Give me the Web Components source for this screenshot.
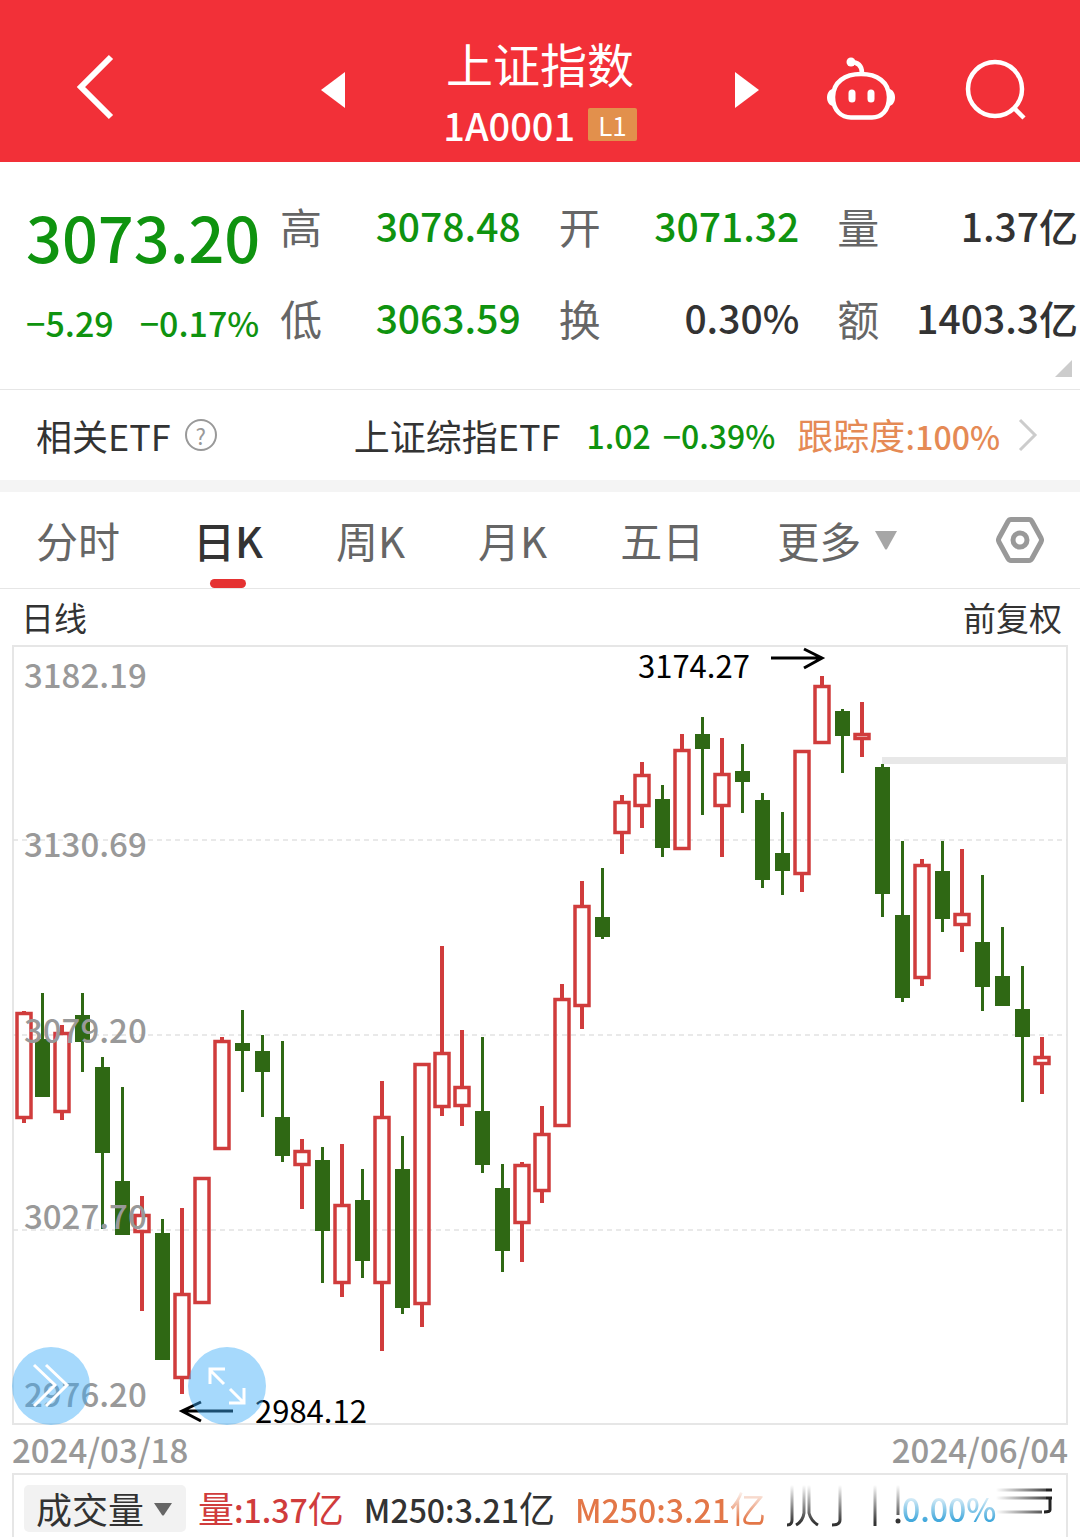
<!DOCTYPE html>
<html lang="zh-CN">

<head>
  <meta charset="UTF-8">
  <meta name="viewport" content="width=device-width, initial-scale=1.0">
  <title>上证指数 1A0001</title>
  <style>
    body {
      margin: 0;
      background: #fff;
      color: #333;
      font-family: "Noto Sans CJK SC", "Noto Sans", sans-serif;
      overflow-x: hidden;
      --up: #d03c3c;
      --down: #0f930f;
      --line: #e6e6e6;
      --orange: #e58a55;
    }
  </style>
</head>

<body>

  <stock-header code="1A0001" level="L1">上证指数</stock-header>

  <stock-quote price="3073.20" change="−5.29" percent="−0.17%">
    <quote-item label="高" trend="down">3078.48</quote-item>
    <quote-item label="开" trend="down">3071.32</quote-item>
    <quote-item label="量">1.37亿</quote-item>
    <quote-item label="低" trend="down">3063.59</quote-item>
    <quote-item label="换">0.30%</quote-item>
    <quote-item label="额">1403.3亿</quote-item>
  </stock-quote>

  <etf-bar>
    <span slot="name">上证综指ETF</span>
    <span slot="price">1.02</span>
    <span slot="percent">−0.39%</span>
    <span slot="match">100%</span>
  </etf-bar>

  <period-tabs active="日K"></period-tabs>

  <k-line-chart from="2024/03/18" to="2024/06/04">
    <span slot="title">日线</span>
    <span slot="adjust">前复权</span>
  </k-line-chart>

  <indicator-bar></indicator-bar>

  <template id="stock-header">
    <style>
      :host {
        display: grid;
        grid-template-columns: 1fr 440px 1fr;
        align-items: center;
        height: 162px;
        background: #f23038;
        color: #fff;
      }

      button {
        display: block;
        padding: 0;
        border: 0;
        background: none;
        color: inherit;
      }

      svg {
        display: block;
      }

      .back {
        margin-left: 74px;
        padding-top: 12px;
      }

      .center,
      .actions,
      .code {
        display: flex;
        align-items: center;
      }

      .center {
        justify-content: space-between;
        padding-top: 18px;
      }

      .code {
        gap: 13px;
        justify-content: center;
        font-size: 38px;
        font-weight: 500;
        line-height: 62px;
      }

      h1 {
        margin: 0;
        padding-top: 7px;
        font-size: 47px;
        font-weight: 400;
        line-height: 62px;
        text-align: center;
      }

      .level {
        padding: 0 10px;
        border-radius: 2px;
        background: #e2904c;
        font-size: 26px;
        font-weight: 400;
        line-height: 33px;
      }

      .actions {
        justify-content: flex-end;
        gap: 68px;
        padding: 16px 52px 0 0;
      }
    </style>
    <button class="back" aria-label="返回">
      <svg width="42" height="66" viewBox="0 0 42 66" fill="none" stroke="currentColor" stroke-width="6">
        <path d="M37 3 7 33 37 63" />
      </svg>
    </button>
    <div class="center">
      <button aria-label="上一个">
        <svg width="26" height="36" viewBox="0 0 26 36"><path d="M1 18 25 0V36Z" fill="currentColor" /></svg>
      </button>
      <div>
        <h1><slot></slot></h1>
        <div class="code"><span id="code"></span><span class="level" id="level"></span></div>
      </div>
      <button aria-label="下一个">
        <svg width="26" height="36" viewBox="0 0 26 36"><path d="M25 18 1 0V36Z" fill="currentColor" /></svg>
      </button>
    </div>
    <div class="actions">
      <button aria-label="智能助手">
        <svg width="72" height="66" viewBox="0 0 72 66" fill="none" stroke="currentColor" stroke-width="4.5">
          <path d="M37 18C53 18 65 26 65 41C65 55 57 61.500 48 61.500H27C18 61.500 9 55 9 41C9 26 21 18 37 18Z" />
          <path d="M26 6C33 6 38 9 38 17" />
          <circle cx="27" cy="6" r="4.500" fill="currentColor" stroke="none" />
          <path d="M9 33C1 34 1 49 9 50ZM65 33C73 34 73 49 65 50Z" fill="currentColor" stroke="none" />
          <path d="M28 37V43M47 37V43" stroke-width="7" stroke-linecap="round" />
        </svg>
      </button>
      <button aria-label="搜索">
        <svg width="64" height="66" viewBox="0 0 64 66" fill="none" stroke="currentColor" stroke-width="4.500">
          <circle cx="31" cy="33" r="27" />
          <path d="M50 52 60 62" />
        </svg>
      </button>
    </div>
  </template>

  <template id="stock-quote">
    <style>
      :host {
        display: flex;
        position: relative;
        height: 228px;
        box-sizing: border-box;
        padding: 17px 2px 0 26px;
        border-bottom: 1px solid var(--line);
      }

      .price {
        width: 254px;
        flex: none;
        color: var(--down);
      }

      .last {
        font-size: 63px;
        font-weight: 500;
        line-height: 114px;
      }

      .change {
        display: flex;
        gap: 26px;
        font-size: 34px;
        font-weight: 500;
        line-height: 60px;
      }

      .items {
        display: grid;
        flex: 1;
        grid-template-columns: repeat(3, 1fr);
        grid-auto-rows: 92px;
        column-gap: 38px;
      }

      .expand {
        position: absolute;
        right: 8px;
        bottom: 12px;
        width: 17px;
        height: 17px;
        padding: 0;
        border: 0;
        background: #ccc;
        clip-path: polygon(100% 0, 100% 100%, 0 100%);
      }
    </style>
    <div class="price">
      <div class="last" id="price"></div>
      <div class="change"><span id="change"></span><span id="percent"></span></div>
    </div>
    <div class="items"><slot></slot></div>
    <button class="expand" aria-label="展开"></button>
  </template>

  <template id="quote-item">
    <style>
      :host {
        display: flex;
        align-items: center;
        justify-content: space-between;
        font-size: 39px;
        font-weight: 500;
        white-space: nowrap;
      }

      :host([trend="down"]) {
        color: var(--down);
      }

      #label {
        color: #666;
        font-size: 42px;
        font-weight: 400;
      }
    </style>
    <span id="label"></span>
    <span><slot></slot></span>
  </template>

  <template id="etf-bar">
    <style>
      :host {
        display: flex;
        align-items: center;
        justify-content: space-between;
        height: 90px;
        padding: 0 42px 0 36px;
        border-bottom: 12px solid #f4f4f4;
        font-size: 36px;
        line-height: 90px;
        white-space: nowrap;
      }

      .related,
      a {
        display: flex;
        align-items: center;
      }

      .help {
        width: 32px;
        height: 32px;
        margin-left: 14px;
        padding: 0;
        border: 2px solid #999;
        border-radius: 50%;
        background: none;
        color: #999;
        font: inherit;
        font-size: 22px;
        line-height: 28px;
      }

      a {
        color: inherit;
        text-decoration: none;
      }

      .number {
        margin-left: 26px;
        color: var(--down);
        font-size: 32px;
        font-weight: 500;
      }

      .number + .number {
        margin-left: 12px;
      }

      .match {
        margin: 0 18px 0 22px;
        color: var(--orange);
      }

      .match b {
        font-size: 32px;
        font-weight: 500;
      }
    </style>
    <div class="related">相关ETF<button class="help" aria-label="说明">?</button></div>
    <a href="#etf">
      <slot name="name"></slot>
      <span class="number"><slot name="price"></slot></span>
      <span class="number"><slot name="percent"></slot></span>
      <span class="match">跟踪度:<b><slot name="match"></slot></b></span>
      <svg width="20" height="34" viewBox="0 0 20 34" fill="none" stroke="#ccc" stroke-width="3">
        <path d="M2 2 17 17 2 32" />
      </svg>
    </a>
  </template>

  <template id="period-tabs">
    <style>
      :host {
        display: flex;
        align-items: center;
        height: 96px;
        padding: 0 36px;
        border-bottom: 1px solid var(--line);
      }

      nav {
        display: flex;
        gap: 73px;
      }

      button {
        position: relative;
        display: flex;
        align-items: center;
        padding: 0;
        border: 0;
        background: none;
        color: #666;
        font: inherit;
        font-size: 42px;
        line-height: 96px;
        white-space: nowrap;
      }

      button[aria-selected="true"] {
        color: #333;
        font-weight: 500;
      }

      button[aria-selected="true"]::after {
        content: "";
        position: absolute;
        bottom: 0;
        left: 50%;
        width: 36px;
        height: 9px;
        margin-left: -18px;
        border-radius: 5px;
        background: #e53232;
      }

      .more svg {
        margin-left: 14px;
      }

      .settings {
        margin-left: auto;
      }
    </style>
    <nav role="tablist">
      <button class="more" aria-haspopup="menu">更多
        <svg width="22" height="19" viewBox="0 0 22 19"><path d="M0 0H22L12 18Q11 19 10 18Z" fill="#a6a6a6" /></svg>
      </button>
    </nav>
    <button class="settings" aria-label="设置">
      <svg width="48" height="48" viewBox="0 0 48 48" fill="none" stroke="#999" stroke-width="5">
        <path d="M15 3.500H33Q35 3.500 36 5.500L45 22Q46 24 45 26L36 42.500Q35 44.500 33 44.500H15Q13 44.500 12 42.500L3 26Q2 24 3 22L12 5.500Q13 3.500 15 3.500Z" />
        <circle cx="24" cy="24" r="7" />
      </svg>
    </button>
  </template>

  <template id="k-line-chart">
    <style>
      :host {
        display: block;
        position: relative;
        padding: 0 12px;
      }

      header,
      footer {
        display: flex;
        justify-content: space-between;
      }

      header {
        padding: 0 6px 0 9px;
        font-size: 33px;
        line-height: 56px;
      }

      footer {
        color: #999;
        font-size: 33px;
        font-weight: 500;
        line-height: 48px;
      }

      .plot {
        position: relative;
      }

      svg {
        display: block;
        width: 100%;
        overflow: visible;
      }

      text {
        font-size: 33px;
        font-weight: 500;
        fill: #999;
      }

      .mark text {
        font-size: 31px;
        font-weight: 400;
        fill: #000;
      }

      .mark path {
        fill: none;
        stroke: #000;
        stroke-width: 3;
      }

      .tools {
        position: absolute;
        left: 0;
        bottom: 0;
        display: flex;
        gap: 98px;
      }

      .tools button {
        width: 78px;
        height: 78px;
        padding: 0;
        border: 0;
        border-radius: 50%;
        background: rgba(57, 171, 248, 0.45);
      }

      .tools path {
        fill: none;
        stroke: #fff;
        stroke-width: 3;
      }
    </style>
    <header><slot name="title"></slot><slot name="adjust"></slot></header>
    <div class="plot">
      <svg id="plot" viewBox="12 645 1056 780" role="img" aria-label="日K线">
        <path d="M13 646H1067V1424H13Z" fill="none" stroke="#e6e6e6" stroke-width="2" />
        <path d="M13 840H1067M13 1035H1067M13 1230H1067" stroke="#e2e2e2" stroke-width="1.500" stroke-dasharray="5 4" />
        <path d="M882 760.500H1068" stroke="#e8e8e8" stroke-width="7" />
        <g id="candles"></g>
        <g id="axis"></g>
        <g class="mark">
          <text x="638" y="678">3174.27</text>
          <path d="M771 658H821M804 649 822 658 804 668" />
          <text x="255" y="1423">2984.12</text>
          <path d="M233 1411H183M201 1402 182 1411 201 1421" />
        </g>
      </svg>
      <div class="tools">
        <button aria-label="下一页">
          <svg viewBox="0 0 78 78"><path d="M22 18 43 38 22 59M34 18 55 38 34 59" /></svg>
        </button>
        <button aria-label="全屏">
          <svg viewBox="0 0 78 78"><path d="M36 37 22 23M22 37V22H37M42 42 56 56M41 56H56V41" stroke-width="4" /></svg>
        </button>
      </div>
    </div>
    <footer><time id="from"></time><time id="to"></time></footer>
  </template>

  <template id="indicator-bar">
    <style>
      :host {
        display: flex;
        align-items: center;
        gap: 20px;
        height: 64px;
        margin: 0 12px;
        padding: 5px 8px 0 10px;
        box-sizing: border-box;
        border: solid #e6e6e6;
        border-width: 2px 2px 0;
        font-size: 36px;
        line-height: 47px;
        white-space: nowrap;
        overflow: hidden;
      }

      b {
        font-size: 32px;
        font-weight: 500;
      }

      .pick {
        position: relative;
        margin-right: -8px;
      }

      select {
        display: block;
        width: 162px;
        height: 47px;
        padding: 0 0 0 12px;
        border: 0;
        border-radius: 5px;
        appearance: none;
        background: #f2f2f2;
        color: #333;
        font: inherit;
      }

      .pick svg {
        position: absolute;
        right: 14px;
        top: 18px;
        pointer-events: none;
      }

      .volume {
        color: var(--up);
      }

      .average {
        color: #e37748;
        mask-image: linear-gradient(to right, #000 82%, transparent 82%), linear-gradient(to bottom, transparent 10%, #000 75%);
      }

      .turnover {
        display: flex;
        align-items: center;
        flex: 1;
      }

      .turnover svg {
        flex: none;
      }

      .rate {
        color: #44a9dc;
        mask-image: linear-gradient(to bottom, transparent 15%, #000 75%);
      }
    </style>
    <div class="pick">
      <select aria-label="指标"><option>成交量</option></select>
      <svg width="18" height="13" viewBox="0 0 18 13"><path d="M0 0H18L10 12Q9 13 8 12Z" fill="#666" /></svg>
    </div>
    <span class="volume">量<b>:1.37</b>亿</span>
    <span><b>M250:3.21</b>亿</span>
    <span class="average"><b>M250:3.21</b>亿</span>
    <div class="turnover">
      <svg width="116" height="47" viewBox="0 0 116 47" fill="none" stroke-width="3">
        <defs>
          <linearGradient id="fade" gradientUnits="userSpaceOnUse" x1="0" y1="0" x2="0" y2="38">
            <stop offset="0" stop-color="#333" stop-opacity="0" />
            <stop offset="1" stop-color="#333" />
          </linearGradient>
        </defs>
        <path d="M6 0V35Q6 40 1 40M18 0V28Q17 36 10 40M23 0V28Q25 36 32 40M54 0V35Q54 40 46 40M89 0V41M112 0V30" stroke="url(#fade)" />
        <circle cx="112" cy="36" r="2.500" fill="#333" />
      </svg>
      <b class="rate">0.00%</b>
      <svg width="64" height="47" viewBox="0 0 64 47" fill="none">
        <defs>
          <linearGradient id="streak" gradientUnits="userSpaceOnUse" x1="0" y1="0" x2="56" y2="0">
            <stop offset="0" stop-color="#333" stop-opacity="0" />
            <stop offset="1" stop-color="#333" />
          </linearGradient>
        </defs>
        <path d="M0 5H50M0 13H50M0 27H46" stroke="url(#streak)" stroke-width="3" />
        <path d="M50 5H56M50 13H56M54 13V25Q54 27 48 27" stroke="#222" stroke-width="3" />
      </svg>
    </div>
  </template>

  <script>
    // x, high, body top, body bottom, low, up (1) or down (0)
    const CANDLES = [
      [24, 1011, 1012, 1119, 1123, 1], [42, 993, 1039, 1097, 1097, 0],
      [62, 1025, 1032, 1113, 1120, 1], [82, 993, 1015, 1042, 1072, 0],
      [102, 1057, 1067, 1153, 1229, 0], [122, 1087, 1181, 1235, 1235, 0],
      [142, 1196, 1214, 1233, 1311, 1], [162, 1219, 1233, 1360, 1360, 0],
      [182, 1208, 1293, 1379, 1394, 1], [202, 1177, 1177, 1304, 1304, 1],
      [222, 1037, 1040, 1150, 1150, 1], [242, 1010, 1043, 1051, 1092, 0],
      [262, 1035, 1051, 1072, 1117, 0], [282, 1041, 1117, 1156, 1162, 0],
      [302, 1139, 1150, 1166, 1209, 1], [322, 1147, 1160, 1231, 1283, 0],
      [342, 1144, 1204, 1284, 1297, 1], [362, 1169, 1200, 1261, 1278, 0],
      [382, 1081, 1116, 1284, 1351, 1], [402, 1136, 1169, 1308, 1314, 0],
      [422, 1063, 1063, 1305, 1327, 1], [442, 946, 1052, 1108, 1116, 1],
      [462, 1030, 1086, 1107, 1126, 1], [482, 1037, 1111, 1165, 1173, 0],
      [502, 1164, 1188, 1251, 1272, 0], [522, 1162, 1164, 1224, 1262, 1],
      [542, 1106, 1133, 1192, 1203, 1], [562, 984, 998, 1127, 1127, 1],
      [582, 881, 905, 1007, 1029, 1], [602, 868, 917, 937, 939, 0],
      [622, 795, 801, 834, 854, 1], [642, 762, 774, 807, 828, 1],
      [662, 785, 799, 848, 857, 0], [682, 734, 749, 850, 850, 1],
      [702, 717, 734, 749, 815, 0], [722, 738, 773, 807, 857, 1],
      [742, 744, 771, 782, 813, 0], [762, 793, 800, 880, 888, 0],
      [782, 812, 853, 871, 895, 0], [802, 750, 750, 875, 892, 1],
      [822, 676, 685, 744, 744, 1], [842, 709, 711, 736, 773, 0],
      [862, 702, 733, 740, 757, 1], [882, 764, 767, 894, 917, 0],
      [902, 841, 915, 998, 1002, 0], [922, 859, 864, 979, 986, 1],
      [942, 841, 871, 919, 932, 0], [962, 849, 913, 926, 952, 1],
      [982, 875, 942, 987, 1011, 0], [1002, 927, 976, 1006, 1006, 0],
      [1022, 966, 1009, 1037, 1102, 0], [1042, 1037, 1056, 1065, 1094, 1],
    ];

    const AXIS = [
      ["3182.19", 688], ["3130.69", 857], ["3079.20", 1043], ["3027.70", 1229], ["2976.20", 1407],
    ];

    class TemplateElement extends HTMLElement {
      constructor() {
        super();
        const template = document.querySelector(`template#${this.localName}`);
        this.attachShadow({ mode: "open" }).appendChild(template.content.cloneNode(true));
      }

      // Copies each named attribute into the shadow element with the same id.
      fill(...names) {
        for (const name of names) {
          this.shadowRoot.getElementById(name).textContent = this.getAttribute(name);
        }
      }
    }

    class StockHeader extends TemplateElement {
      connectedCallback() {
        this.fill("code", "level");
      }
    }

    class StockQuote extends TemplateElement {
      connectedCallback() {
        this.fill("price", "change", "percent");
      }
    }

    class QuoteItem extends TemplateElement {
      connectedCallback() {
        this.fill("label");
      }
    }

    class EtfBar extends TemplateElement { }

    class PeriodTabs extends TemplateElement {
      connectedCallback() {
        const more = this.shadowRoot.querySelector(".more");

        for (const name of ["分时", "日K", "周K", "月K", "五日"]) {
          const tab = document.createElement("button");
          tab.textContent = name;
          tab.setAttribute("role", "tab");
          tab.setAttribute("aria-selected", name === this.getAttribute("active"));
          tab.addEventListener("click", () => this.#select(tab));
          more.before(tab);
        }
      }

      #select(selected) {
        for (const tab of this.shadowRoot.querySelectorAll("[role=tab]")) {
          tab.setAttribute("aria-selected", tab === selected);
        }
      }
    }

    class KLineChart extends TemplateElement {
      connectedCallback() {
        this.fill("from", "to");
        this.shadowRoot.getElementById("candles").innerHTML = CANDLES.map(this.#candle).join("");
        this.shadowRoot.getElementById("axis").innerHTML = AXIS
          .map(([label, y]) => `<text x="24" y="${y}">${label}</text>`).join("");
      }

      #candle([x, high, top, bottom, low, up]) {
        if (up) {
          return `<path d="M${x} ${high}V${top + 1}M${x} ${bottom - 1}V${low}" stroke="#d03c3c" stroke-width="4" />
            <rect x="${x - 7}" y="${top + 1.5}" width="14" height="${bottom - top - 3}" fill="none" stroke="#d03c3c" stroke-width="3.5" />`;
        }
        return `<rect x="${x - 1}" y="${high}" width="3" height="${low - high}" fill="#2f6814" />
          <rect x="${x - 7}" y="${top}" width="15" height="${bottom - top}" fill="#2f6814" />`;
      }
    }

    class IndicatorBar extends TemplateElement { }

    customElements.define("stock-header", StockHeader);
    customElements.define("stock-quote", StockQuote);
    customElements.define("quote-item", QuoteItem);
    customElements.define("etf-bar", EtfBar);
    customElements.define("period-tabs", PeriodTabs);
    customElements.define("k-line-chart", KLineChart);
    customElements.define("indicator-bar", IndicatorBar);
  </script>
</body>

</html>
